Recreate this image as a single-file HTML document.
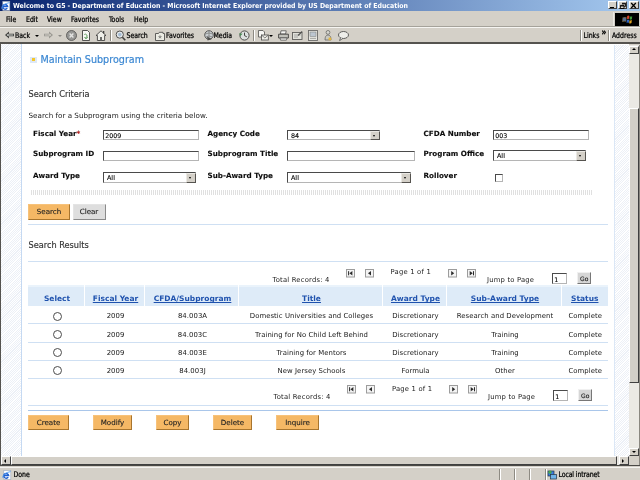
<!DOCTYPE html>
<html><head><meta charset="utf-8"><title>Welcome to G5 - Department of Education</title>
<style>
html,body{margin:0;padding:0;width:640px;height:480px;overflow:hidden;background:#d4d0c8;}
body{position:relative;font-family:"DejaVu Sans","Liberation Sans",sans-serif;font-size:7.2px;color:#222;}
.a{position:absolute;white-space:nowrap;line-height:1;}
svg.a{overflow:visible}
.ch{font-family:"DejaVu Sans Condensed","Liberation Sans",sans-serif;font-size:6.9px;color:#000;transform:scaleY(1.12);transform-origin:50% 50%;-webkit-text-stroke:.22px #000;}
#tb{left:0;top:0;width:640px;height:11px;background:linear-gradient(to right,#0a246a 0%,#14317a 8%,#a6caf0 100%);}
#tt{left:13px;top:2.7px;color:#fff;font-weight:bold;font-family:"DejaVu Sans Condensed","Liberation Sans",sans-serif;font-size:6.9px;}
.wb{top:1.25px;width:8px;height:8.2px;background:#d4d0c8;border:1px solid #fff;border-right-color:#404040;border-bottom-color:#404040;box-sizing:border-box;}
.lbl{font-weight:bold;font-size:7.2px;color:#0c0c0c;-webkit-text-stroke:.1px #0c0c0c;}
.inp{background:#fff;border:1px solid #b5b5b5;border-top-color:#4a4a4a;border-left-color:#4a4a4a;box-sizing:border-box;font-size:6.3px;color:#000;padding:1.7px 0 0 1.2px;line-height:1;-webkit-text-stroke:.12px #000;}
.sel{padding-top:2.2px;padding-left:3px;font-size:6.4px}
.sel .arr{position:absolute;right:-1px;top:0;bottom:-1px;width:10.5px;background:#d4d0c8;border:1px solid #ebe9e4;border-right-color:#55534f;border-bottom-color:#55534f;box-sizing:border-box;}
.sel .arr:after{content:"";position:absolute;left:2.4px;top:3.2px;border:1.7px solid transparent;border-top:2.1px solid #000;border-bottom:0;}
.btn{box-sizing:border-box;background:#f5b865;border:1px solid #f7c27a;-webkit-text-stroke:.12px #222;border-right-color:#a8752e;border-bottom-color:#a8752e;text-align:center;font-size:7.1px;color:#222;}
.btn.g{background:#dedede;border-color:#e4e4e4;border-right-color:#8a8a8a;border-bottom-color:#8a8a8a;}
.hl{height:1px;background:#cfe0f3;}
.th{top:284.7px;height:21.3px;background:#deebf8;box-sizing:border-box;text-align:center;font-weight:bold;font-size:7.5px;color:#1f52ae;padding:8.6px 0 0 2px;border-top:2.6px solid #eaf3fb}
.th u{text-decoration:underline;}
.td{text-align:center;font-size:6.9px;color:#181818;letter-spacing:.05px;padding-left:2px;box-sizing:border-box}
.pg{font-size:6.8px;letter-spacing:.2px;color:#222}
.rad{width:9px;height:9px;border:1px solid #4c4c4c;border-radius:50%;background:#fff;box-sizing:border-box;}
.nav{width:9px;height:8px;background:#ececec;border:1px solid #8c8c8c;box-sizing:border-box;}
.sb{background:#d4d0c8;border:1px solid #fff;border-right-color:#404040;border-bottom-color:#404040;box-sizing:border-box;}
.vs{width:1px;background:#8d8a82;border-right:1px solid #fff;}
.hatch{background:repeating-linear-gradient(135deg,#fff 0 .85px,#ecf0f7 .85px 1.6px)}
.track{background:#ebe9e4}
#root{position:absolute;left:0;top:0;width:640px;height:480px;overflow:hidden;will-change:transform;}
</style></head><body><div id="root">
<!-- title bar -->
<div class="a" id="tb"></div>
<svg class="a" style="left:1px;top:1px" width="10" height="10" viewBox="0 0 10 10"><rect x="1.8" y=".4" width="7" height="9" fill="#fff" stroke="#9aa8bd" stroke-width=".6"/><path d="M2.2 5.6 H6.6 A2.4 2.4 0 1 0 6.2 7.2" fill="none" stroke="#1f5fd0" stroke-width="1.5"/><path d="M.6 7.6 Q1 3 8.6 1.6" stroke="#4d9bf0" stroke-width=".9" fill="none"/></svg>
<div class="a" id="tt">Welcome to G5 - Department of Education - Microsoft Internet Explorer provided by US Department of Education</div>
<div class="a wb" style="left:607.5px;width:9.4px"></div><div class="a" style="left:610px;top:6.5px;width:4px;height:1.3px;background:#000"></div>
<div class="a wb" style="left:617.5px;width:9.7px"></div>
<svg class="a" style="left:619.5px;top:2.6px" width="6" height="6" viewBox="0 0 6 6"><path d="M2 .3 H5.6 V3.4 H4.2 M2 .9 H5.6" stroke="#000" stroke-width=".9" fill="none"/><path d="M.4 2.4 H4 V5.5 H.4Z M.4 3 H4" stroke="#000" stroke-width=".9" fill="none"/></svg>
<div class="a wb" style="left:629px;width:9.7px"></div>
<svg class="a" style="left:631.3px;top:2.8px" width="5" height="5" viewBox="0 0 5 5"><path d="M0.2 0 L4.8 5 M4.8 0 L0.2 5" stroke="#000" stroke-width="1.2"/></svg>
<!-- menu -->
<div class="a ch" style="left:6px;top:17px">File</div>
<div class="a ch" style="left:26px;top:17px">Edit</div>
<div class="a ch" style="left:47px;top:17px">View</div>
<div class="a ch" style="left:71px;top:17px">Favorites</div>
<div class="a ch" style="left:109px;top:17px">Tools</div>
<div class="a ch" style="left:134px;top:17px">Help</div>
<div class="a" style="left:615px;top:12.8px;width:24px;height:14px;background:#000"></div><div class="a" style="left:613.3px;top:12px;width:.8px;height:15px;background:#eceae5"></div>
<svg class="a" style="left:622px;top:14.7px" width="11" height="9.5" viewBox="0 0 11 9.5"><path d="M.5 2.5 Q2.5 1.5 4.6 2.2 L4.2 6.8 Q2.4 6 .2 7Z" fill="#8c7a55" opacity=".8"/><path d="M5.2 1 Q6.3 .2 7.4 1 L7.1 4 Q6.1 3.4 5 4.1Z" fill="#d8432a"/><path d="M7.9 1.3 Q9 2 10.2 1.2 L9.9 4.2 Q8.8 5 7.6 4.3Z" fill="#3f9a3a"/><path d="M4.9 4.9 Q6 4.2 7.1 4.9 L6.8 7.9 Q5.7 7.3 4.6 8Z" fill="#2d67c8"/><path d="M7.5 5.2 Q8.6 5.9 9.8 5.1 L9.5 8.1 Q8.4 8.9 7.2 8.2Z" fill="#e0a420"/><path d="M1 3 Q2.5 2.4 4 3 L3.8 6 Q2.4 5.4 .8 6Z" fill="#4a6fb0" opacity=".7"/></svg>
<!-- toolbar -->
<div class="a" style="left:0;top:26.4px;width:640px;height:.8px;background:#a5a29a"></div>
<div class="a" style="left:0;top:27.2px;width:640px;height:.9px;background:#f6f5f2"></div>
<svg class="a" style="opacity:.82;left:5px;top:31px" width="9" height="8" viewBox="0 0 9 8"><path d="M0 4 L4 0.5 V2.7 H9 V5.3 H4 V7.5Z" fill="#1e1e1e"/><path d="M1.6 4 L3.4 2.4 V3.4 H8.2 V4.6 H3.4 V5.6Z" fill="#cfd3cf"/></svg>
<div class="a ch" style="left:15px;top:33px">Back</div>
<div class="a" style="left:35px;top:34.5px;border:2px solid transparent;border-top:2.2px solid #000;border-bottom:0"></div>
<svg class="a" style="opacity:.82;left:44px;top:31px" width="9" height="8" viewBox="0 0 9 8"><path d="M9 4 L5 0.5 V2.7 H0 V5.3 H5 V7.5Z" fill="#8c8a85"/><path d="M7.4 4 L5.6 2.4 V3.4 H.8 V4.6 H5.6 V5.6Z" fill="#d4d0c8"/></svg>
<div class="a" style="left:58px;top:34.5px;border:2px solid transparent;border-top:2.2px solid #8c8a85;border-bottom:0"></div>
<svg class="a" style="opacity:.82;left:66px;top:30px" width="11" height="11" viewBox="0 0 11 11"><circle cx="5.5" cy="5.5" r="5" fill="#8a8a8a" stroke="#333" stroke-width=".8"/><path d="M3.6 3.6 L7.4 7.4 M7.4 3.6 L3.6 7.4" stroke="#e8e8e8" stroke-width="1.4"/></svg>
<svg class="a" style="opacity:.82;left:82px;top:30px" width="8" height="11" viewBox="0 0 8 11"><path d="M.5 .5 H5.5 L7.5 2.5 V10.5 H.5Z" fill="#fff" stroke="#222" stroke-width=".9"/><path d="M2.3 4.5 A1.8 1.8 0 1 1 2.3 7.5 M5.6 7 A1.8 1.8 0 0 1 3 8.2" stroke="#3a8a3a" stroke-width=".9" fill="none"/></svg>
<svg class="a" style="opacity:.82;left:96px;top:30px" width="10" height="11" viewBox="0 0 10 11"><path d="M0 5.5 L5 .8 L10 5.5 H8.6 V10.5 H1.4 V5.5Z" fill="#f4f4f0" stroke="#222" stroke-width=".9"/><rect x="4" y="7" width="2" height="3.5" fill="#555"/><rect x="7" y="1" width="1.3" height="2.5" fill="#222"/></svg>
<div class="a vs" style="left:110px;top:30px;height:11px"></div>
<svg class="a" style="opacity:.82;left:115px;top:30px" width="11" height="11" viewBox="0 0 11 11"><circle cx="4.8" cy="4.6" r="3.6" fill="#e9eef4" stroke="#333" stroke-width="1"/><circle cx="4.8" cy="4.6" r="1.8" fill="#9bb7d6"/><path d="M7.4 7.2 L10.3 10.2" stroke="#222" stroke-width="1.6"/></svg>
<div class="a ch" style="left:126.5px;top:33px">Search</div>
<svg class="a" style="opacity:.82;left:155px;top:30.5px" width="10" height="10" viewBox="0 0 10 10"><path d="M.5 2.5 H3.5 L4.3 1.3 H8 V2.5 H9.5 V9.5 H.5Z" fill="#f1f1ea" stroke="#333" stroke-width=".9"/><path d="M5 3.6 L5.6 5.2 H7.2 L5.9 6.2 L6.4 7.8 L5 6.8 L3.6 7.8 L4.1 6.2 L2.8 5.2 H4.4Z" fill="#777"/></svg>
<div class="a ch" style="left:166px;top:33px">Favorites</div>
<svg class="a" style="opacity:.82;left:203.5px;top:30px" width="10" height="11" viewBox="0 0 10 11"><circle cx="5" cy="5" r="4.3" fill="#c8cdd4" stroke="#333" stroke-width=".9"/><path d="M1 4 Q5 2 9 4 M1.5 7 Q5 5 8.5 7 M5 .8 V9.2" stroke="#555" stroke-width=".6" fill="none"/><path d="M3 6.5 L8 9 L3.6 10.6Z" fill="#333"/></svg>
<div class="a ch" style="left:213.5px;top:33px">Media</div>
<svg class="a" style="opacity:.82;left:239px;top:30px" width="11" height="11" viewBox="0 0 11 11"><circle cx="5.5" cy="5.5" r="4.6" fill="#dfe3e6" stroke="#333" stroke-width="1"/><path d="M5.5 2.6 V5.6 L7.8 6.8" stroke="#222" stroke-width="1" fill="none"/><path d="M.2 3.2 L3.6 3.8 L1.2 6.2Z" fill="#2a7a3a"/></svg>
<div class="a vs" style="left:253px;top:30px;height:11px"></div>
<svg class="a" style="opacity:.82;left:258px;top:30px" width="11" height="11" viewBox="0 0 11 11"><path d="M.5 .5 H5 L6.5 2 V7 H.5Z" fill="#fff" stroke="#333" stroke-width=".8"/><rect x="3.5" y="5" width="6.8" height="5" fill="#f6f6f2" stroke="#333" stroke-width=".8"/><path d="M3.5 5 L6.9 8 L10.3 5" stroke="#333" stroke-width=".7" fill="none"/></svg>
<div class="a" style="left:269px;top:34.5px;border:2px solid transparent;border-top:2.2px solid #000;border-bottom:0"></div>
<svg class="a" style="opacity:.82;left:277.5px;top:30px" width="11" height="11" viewBox="0 0 11 11"><path d="M3 .8 H8.2 L7.6 4 H2.4Z" fill="#fff" stroke="#333" stroke-width=".8"/><path d="M.6 4.2 H10.4 V8 H.6Z" fill="#bdbdb8" stroke="#222" stroke-width=".9"/><path d="M2 8 H9 L8.4 10.2 H2.6Z" fill="#eee" stroke="#333" stroke-width=".7"/></svg>
<svg class="a" style="opacity:.82;left:292px;top:31px" width="11" height="9" viewBox="0 0 11 9"><rect x=".5" y="1.5" width="9.5" height="7" fill="#e4e4df" stroke="#444" stroke-width=".9"/><path d="M2 4 H8.5 M2 6 H6" stroke="#888" stroke-width=".8"/><path d="M6 4.5 L10.2 .5" stroke="#333" stroke-width="1.1"/></svg>
<svg class="a" style="opacity:.82;left:308px;top:30px" width="10" height="11" viewBox="0 0 10 11"><rect x=".5" y=".5" width="9" height="10" fill="#ecece8" stroke="#555" stroke-width=".9"/><rect x="2" y="2" width="6" height="4.5" fill="#b9c4d2" stroke="#666" stroke-width=".5"/><path d="M2 8.4 H8" stroke="#888" stroke-width=".8"/></svg>
<svg class="a" style="opacity:.82;left:323.5px;top:30px" width="8" height="11" viewBox="0 0 8 11"><circle cx="4" cy="2.4" r="1.9" fill="#d8d8d2" stroke="#444" stroke-width=".7"/><path d="M1 10 Q1 5 4 5 Q7 5 7 10Z" fill="#c8c8c2" stroke="#444" stroke-width=".7"/><rect x="4.6" y="7.6" width="2.6" height="2.6" fill="#e8b020"/></svg>
<svg class="a" style="opacity:.82;left:337.5px;top:30.5px" width="11" height="10" viewBox="0 0 11 10"><ellipse cx="5.5" cy="4" rx="5" ry="3.5" fill="#f4f4f2" stroke="#333" stroke-width=".9"/><path d="M2.6 6.6 L1.6 9.6 L5 7.3" fill="#f4f4f2" stroke="#333" stroke-width=".8"/></svg>
<div class="a vs" style="left:580px;top:30px;height:11px"></div>
<div class="a ch" style="left:583.5px;top:33px">Links</div>
<div class="a ch" style="left:601.5px;top:28px;font-size:8.5px;font-weight:bold">»</div>
<div class="a vs" style="left:608px;top:30px;height:11px"></div>
<div class="a ch" style="left:612px;top:33px">Address</div>
<!-- content frame -->
<div class="a" style="left:0;top:41.6px;width:640px;height:.7px;background:#ecebe7"></div><div class="a" style="left:0;top:42.3px;width:640px;height:1.6px;background:#55534f"></div>
<div class="a" style="left:0;top:43.8px;width:1.25px;height:422px;background:#55534f"></div>
<div class="a" style="left:1.25px;top:43.8px;width:628px;height:412px;background:#fff"></div>
<div class="a hatch" style="left:1.25px;top:43.8px;width:19.5px;height:412px"></div>
<div class="a" style="left:20.5px;top:43.8px;width:1px;height:412px;background:#c5d9f2"></div>
<div class="a" style="left:614px;top:45px;width:1px;height:411px;background:#dbe7f6"></div>
<div class="a hatch" style="left:615px;top:45px;width:14px;height:411px"></div>
<!-- vscroll -->
<div class="a track" style="left:629px;top:45px;width:10px;height:411px"></div>
<div class="a" style="left:638.5px;top:45px;width:1.5px;height:421px;background:#8a8780"></div>
<div class="a sb" style="left:629px;top:45.5px;width:10px;height:8px"></div>
<div class="a" style="left:631.5px;top:48px;border:2.3px solid transparent;border-bottom:2.6px solid #000;border-top:0"></div>
<div class="a sb" style="left:629px;top:108px;width:10px;height:275px;background:#d2cfc7"></div>
<div class="a sb" style="left:629px;top:447.5px;width:10px;height:8px"></div>
<div class="a" style="left:631.5px;top:450.5px;border:2.3px solid transparent;border-top:2.6px solid #000;border-bottom:0"></div>
<!-- page -->
<div class="a" style="left:30.3px;top:57px;width:6.6px;height:6px;background:#dde8f6"></div>
<div class="a" style="left:31.6px;top:58px;width:3.5px;height:3.4px;background:#f5c62a"></div>
<div class="a" style="left:40.5px;top:54.6px;font-size:9.6px;color:#3c88d3;-webkit-text-stroke:.2px #3c88d3">Maintain Subprogram</div>
<div class="a" style="left:28.5px;top:89.6px;font-size:8.2px;color:#333;-webkit-text-stroke:.15px #333">Search Criteria</div>
<div class="a" style="left:28.5px;top:111.6px;color:#222">Search for a Subprogram using the criteria below.</div>

<div class="a lbl" style="left:33px;top:129.8px">Fiscal Year<span style="color:#e01010">*</span></div>
<div class="a lbl" style="left:33px;top:150.2px">Subprogram ID</div>
<div class="a lbl" style="left:33px;top:172px">Award Type</div>
<div class="a lbl" style="left:207.5px;top:129.8px">Agency Code</div>
<div class="a lbl" style="left:207.5px;top:150.2px">Subprogram Title</div>
<div class="a lbl" style="left:207.5px;top:172px">Sub-Award Type</div>
<div class="a lbl" style="left:423.5px;top:129.8px">CFDA Number</div>
<div class="a lbl" style="left:423.5px;top:150.2px">Program Office</div>
<div class="a lbl" style="left:423.5px;top:172px">Rollover</div>

<div class="a inp" style="left:103px;top:130px;width:96px;height:10px">2009</div>
<div class="a inp" style="left:103px;top:151px;width:96px;height:10px"></div>
<div class="a inp sel" style="left:103px;top:172px;width:93px;height:11px">All<span class="arr"></span></div>
<div class="a inp sel" style="left:287px;top:130px;width:93px;height:10px;padding-top:1.7px">84<span class="arr"></span></div>
<div class="a inp" style="left:287px;top:151px;width:128px;height:10px"></div>
<div class="a inp sel" style="left:287px;top:172px;width:124px;height:11px">All<span class="arr"></span></div>
<div class="a inp" style="left:493px;top:130px;width:96px;height:10px">003</div>
<div class="a inp sel" style="left:493px;top:150px;width:93px;height:11px">All<span class="arr"></span></div>
<div class="a inp" style="left:495px;top:174px;width:8px;height:8px"></div>

<div class="a" style="left:31px;top:190px;width:561px;height:5px;background:repeating-linear-gradient(90deg,#e0e0e0 0 1px,#fff 1px 2px)"></div>
<div class="a btn" style="left:28px;top:204px;width:42px;height:15.5px;padding-top:3.2px">Search</div>
<div class="a btn g" style="left:72.5px;top:204px;width:33px;height:15.5px;padding-top:3.2px">Clear</div>
<div class="a hl" style="left:28px;top:223.6px;width:579.5px"></div>
<div class="a" style="left:28.5px;top:241.2px;font-size:8.2px;color:#333;-webkit-text-stroke:.15px #333">Search Results</div>
<div class="a hl" style="left:28px;top:261px;width:579.5px"></div>

<!-- top pager -->
<div class="a pg" style="left:272.5px;top:277.2px">Total Records: 4</div>
<svg class="a" style="left:346px;top:268.5px" width="9" height="8.5" viewBox="0 0 9 8.5"><rect x=".5" y=".5" width="8" height="7.5" fill="#f4f4f4" stroke="#9c9c9c" stroke-width="1"/><path d="M2.6 2.2 V6.3" stroke="#2a2a2a" stroke-width="1"/><path d="M6.4 2 V6.5 L3.4 4.25Z" fill="#2a2a2a"/></svg>
<svg class="a" style="left:365px;top:268.5px" width="9" height="8.5" viewBox="0 0 9 8.5"><rect x=".5" y=".5" width="8" height="7.5" fill="#f4f4f4" stroke="#9c9c9c" stroke-width="1"/><path d="M6 2 V6.5 L3 4.25Z" fill="#2a2a2a"/></svg>
<div class="a pg" style="left:390.6px;top:269.2px">Page 1 of 1</div>
<svg class="a" style="left:448px;top:268.5px" width="9" height="8.5" viewBox="0 0 9 8.5"><rect x=".5" y=".5" width="8" height="7.5" fill="#f4f4f4" stroke="#9c9c9c" stroke-width="1"/><path d="M3.2 2 V6.5 L6.2 4.25Z" fill="#2a2a2a"/></svg>
<svg class="a" style="left:467px;top:268.5px" width="9" height="8.5" viewBox="0 0 9 8.5"><rect x=".5" y=".5" width="8" height="7.5" fill="#f4f4f4" stroke="#9c9c9c" stroke-width="1"/><path d="M6.5 2.2 V6.3" stroke="#2a2a2a" stroke-width="1"/><path d="M2.7 2 V6.5 L5.7 4.25Z" fill="#2a2a2a"/></svg>
<div class="a pg" style="left:487px;top:277.2px">Jump to Page</div>
<div class="a inp" style="left:552px;top:273px;width:15px;height:11px;padding-top:3px">1</div>
<div class="a btn g" style="left:577.3px;top:272.4px;width:13.8px;height:12px;font-size:6px;padding-top:2.6px;background:#d6d6d6;border-top-color:#f0f0f0;border-left-color:#f0f0f0;border-right-color:#777;border-bottom-color:#777">Go</div>

<!-- table header -->
<div class="a th" style="left:28px;width:56px">Select</div>
<div class="a th" style="left:85px;width:59px"><u>Fiscal Year</u></div>
<div class="a th" style="left:145px;width:93px"><u>CFDA/Subprogram</u></div>
<div class="a th" style="left:239px;width:143px"><u>Title</u></div>
<div class="a th" style="left:383px;width:63px"><u>Award Type</u></div>
<div class="a th" style="left:447px;width:114px"><u>Sub-Award Type</u></div>
<div class="a th" style="left:562px;width:45.5px;padding-left:0"><u>Status</u></div>
<!-- rows -->
<div class="a rad" style="left:52.5px;top:311.5px"></div>
<div class="a td" style="left:85px;width:59px;top:313px">2009</div>
<div class="a td" style="left:145px;width:93px;top:313px">84.003A</div>
<div class="a td" style="left:239px;width:143px;top:313px">Domestic Universities and Colleges</div>
<div class="a td" style="left:383px;width:63px;top:313px">Discretionary</div>
<div class="a td" style="left:447px;width:114px;top:313px">Research and Development</div>
<div class="a td" style="left:562px;width:45.5px;padding-left:1px;top:313px">Complete</div>
<div class="a hl" style="left:28px;top:323px;width:579.5px"></div>

<div class="a rad" style="left:52.5px;top:329.5px"></div>
<div class="a td" style="left:85px;width:59px;top:331.5px">2009</div>
<div class="a td" style="left:145px;width:93px;top:331.5px">84.003C</div>
<div class="a td" style="left:239px;width:143px;top:331.5px">Training for No Child Left Behind</div>
<div class="a td" style="left:383px;width:63px;top:331.5px">Discretionary</div>
<div class="a td" style="left:447px;width:114px;top:331.5px">Training</div>
<div class="a td" style="left:562px;width:45.5px;padding-left:1px;top:331.5px">Complete</div>
<div class="a hl" style="left:28px;top:342px;width:579.5px"></div>

<div class="a rad" style="left:52.5px;top:347.5px"></div>
<div class="a td" style="left:85px;width:59px;top:349.8px">2009</div>
<div class="a td" style="left:145px;width:93px;top:349.8px">84.003E</div>
<div class="a td" style="left:239px;width:143px;top:349.8px">Training for Mentors</div>
<div class="a td" style="left:383px;width:63px;top:349.8px">Discretionary</div>
<div class="a td" style="left:447px;width:114px;top:349.8px">Training</div>
<div class="a td" style="left:562px;width:45.5px;padding-left:1px;top:349.8px">Complete</div>
<div class="a hl" style="left:28px;top:360px;width:579.5px"></div>

<div class="a rad" style="left:52.5px;top:366px"></div>
<div class="a td" style="left:85px;width:59px;top:367.9px">2009</div>
<div class="a td" style="left:145px;width:93px;top:367.9px">84.003J</div>
<div class="a td" style="left:239px;width:143px;top:367.9px">New Jersey Schools</div>
<div class="a td" style="left:383px;width:63px;top:367.9px">Formula</div>
<div class="a td" style="left:447px;width:114px;top:367.9px">Other</div>
<div class="a td" style="left:562px;width:45.5px;padding-left:1px;top:367.9px">Complete</div>
<div class="a hl" style="left:28px;top:378px;width:579.5px"></div>

<!-- bottom pager -->
<div class="a pg" style="left:273.5px;top:394.2px">Total Records: 4</div>
<svg class="a" style="left:347px;top:385px" width="9" height="8.5" viewBox="0 0 9 8.5"><rect x=".5" y=".5" width="8" height="7.5" fill="#f4f4f4" stroke="#9c9c9c" stroke-width="1"/><path d="M2.6 2.2 V6.3" stroke="#2a2a2a" stroke-width="1"/><path d="M6.4 2 V6.5 L3.4 4.25Z" fill="#2a2a2a"/></svg>
<svg class="a" style="left:366px;top:385px" width="9" height="8.5" viewBox="0 0 9 8.5"><rect x=".5" y=".5" width="8" height="7.5" fill="#f4f4f4" stroke="#9c9c9c" stroke-width="1"/><path d="M6 2 V6.5 L3 4.25Z" fill="#2a2a2a"/></svg>
<div class="a pg" style="left:392px;top:386.2px">Page 1 of 1</div>
<svg class="a" style="left:449px;top:385px" width="9" height="8.5" viewBox="0 0 9 8.5"><rect x=".5" y=".5" width="8" height="7.5" fill="#f4f4f4" stroke="#9c9c9c" stroke-width="1"/><path d="M3.2 2 V6.5 L6.2 4.25Z" fill="#2a2a2a"/></svg>
<svg class="a" style="left:468px;top:385px" width="9" height="8.5" viewBox="0 0 9 8.5"><rect x=".5" y=".5" width="8" height="7.5" fill="#f4f4f4" stroke="#9c9c9c" stroke-width="1"/><path d="M6.5 2.2 V6.3" stroke="#2a2a2a" stroke-width="1"/><path d="M2.7 2 V6.5 L5.7 4.25Z" fill="#2a2a2a"/></svg>
<div class="a pg" style="left:488px;top:394.2px">Jump to Page</div>
<div class="a inp" style="left:553px;top:390px;width:15px;height:11px;padding-top:3px">1</div>
<div class="a btn g" style="left:578.3px;top:389px;width:13.8px;height:12px;font-size:6px;padding-top:2.6px;background:#d6d6d6;border-top-color:#f0f0f0;border-left-color:#f0f0f0;border-right-color:#777;border-bottom-color:#777">Go</div>
<div class="a hl" style="left:28px;top:405px;width:579.5px"></div>
<div class="a hl" style="left:28px;top:410px;width:579.5px;background:#a9c6ea"></div>

<!-- action buttons -->
<div class="a btn" style="left:28px;top:415.2px;width:41px;height:14.8px;padding-top:3.2px">Create</div>
<div class="a btn" style="left:93px;top:415.2px;width:39px;height:14.8px;padding-top:3.2px">Modify</div>
<div class="a btn" style="left:156px;top:415.2px;width:33px;height:14.8px;padding-top:3.2px">Copy</div>
<div class="a btn" style="left:213px;top:415.2px;width:39px;height:14.8px;padding-top:3.2px">Delete</div>
<div class="a btn" style="left:276px;top:415.2px;width:43px;height:14.8px;padding-top:3.2px">Inquire</div>

<!-- hscroll -->
<div class="a track" style="left:1.25px;top:455.8px;width:628px;height:9.5px"></div>
<div class="a sb" style="left:1.25px;top:455.8px;width:9.3px;height:9.5px"></div>
<div class="a" style="left:4.4px;top:459.2px;border:2.4px solid transparent;border-right:2.6px solid #000;border-left:0"></div>
<div class="a sb" style="left:11px;top:455.8px;width:605.5px;height:9.5px"></div>
<div class="a sb" style="left:618.5px;top:455.8px;width:10.5px;height:9.5px"></div>
<div class="a" style="left:622.3px;top:459.2px;border:2.4px solid transparent;border-left:2.6px solid #000;border-right:0"></div>
<div class="a" style="left:629px;top:455.8px;width:9.5px;height:9.5px;background:#d4d0c8"></div>
<!-- status -->
<div class="a" style="left:0;top:465.3px;width:640px;height:1.2px;background:#4a4946"></div>
<div class="a" style="left:0;top:466.5px;width:640px;height:13.5px;background:#d4d0c8"></div>
<div class="a" style="left:0;top:467px;width:640px;height:1px;background:#f5f4f1"></div>
<svg class="a" style="left:2px;top:469.5px" width="9" height="10" viewBox="0 0 9 10"><rect x="1.8" y=".4" width="7" height="9" fill="#fff" stroke="#9aa8bd" stroke-width=".6"/><path d="M2.2 5.6 H6.6 A2.4 2.4 0 1 0 6.2 7.2" fill="none" stroke="#1f5fd0" stroke-width="1.5"/><path d="M.6 7.6 Q1 3 8.6 1.6" stroke="#4d9bf0" stroke-width=".9" fill="none"/></svg>
<div class="a ch" style="left:13.5px;top:471.8px">Done</div>
<div class="a vs" style="left:498.5px;top:469px;height:11px"></div>
<div class="a vs" style="left:514px;top:469px;height:11px"></div>
<div class="a vs" style="left:529px;top:469px;height:11px"></div>
<div class="a vs" style="left:544.5px;top:469px;height:11px"></div>
<svg class="a" style="left:547px;top:469.5px" width="10" height="10" viewBox="0 0 10 10"><rect x="1" y="1" width="6" height="5" fill="#3a7be0" stroke="#234" stroke-width=".7"/><rect x="3.5" y="4.5" width="6" height="4.5" fill="#6fb3e8" stroke="#234" stroke-width=".7"/><circle cx="3" cy="2.2" r="1.6" fill="#4aa84a"/></svg>
<div class="a ch" style="left:558.5px;top:471.8px;letter-spacing:-.12px">Local intranet</div>
</div></body></html>
